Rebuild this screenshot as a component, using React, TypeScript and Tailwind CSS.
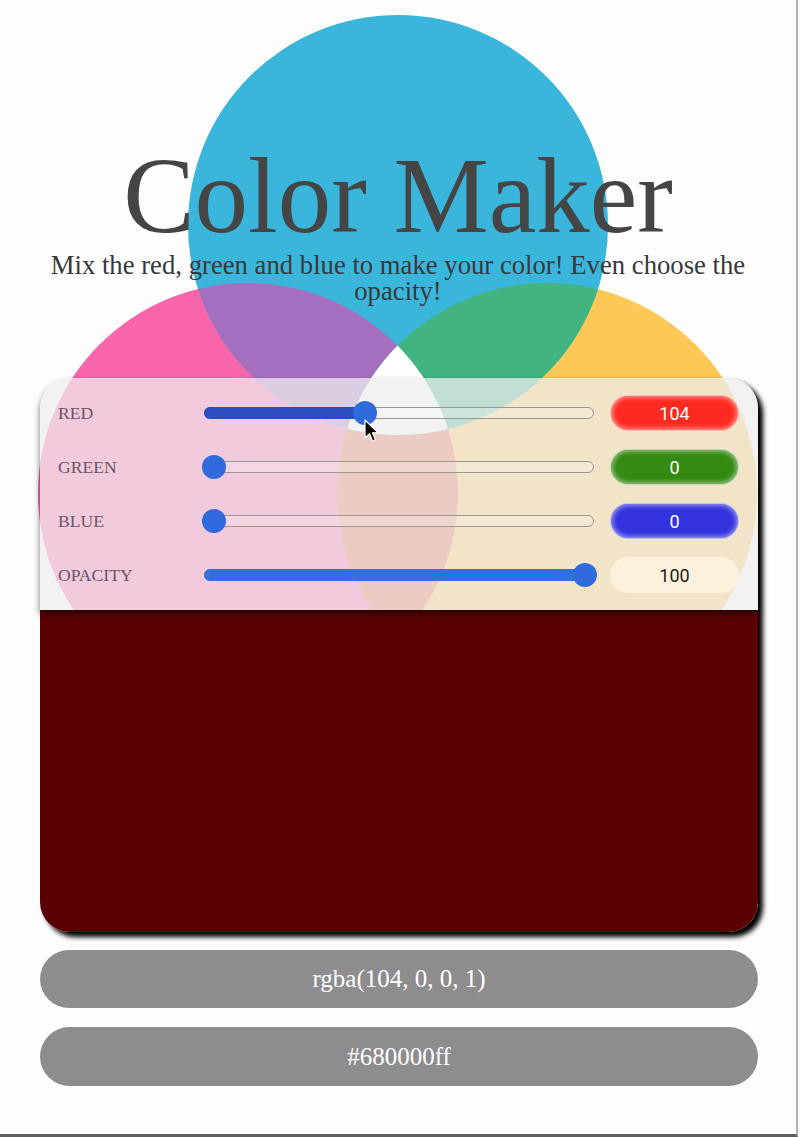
import React from "react";

const serif = { fontFamily: '"Liberation Serif", "Times New Roman", serif' };
const sans = { fontFamily: 'Roboto, "Noto Sans", sans-serif' };

function Circles() {
  return (
    <svg
      className="absolute left-0 top-0"
      width={800}
      height={720}
      viewBox="0 0 800 720"
    >
      <defs>
        <clipPath id="cb">
          <circle cx={398} cy={225} r={210} />
        </clipPath>
        <clipPath id="cp">
          <circle cx={248} cy={493} r={210} />
        </clipPath>
      </defs>
      <circle cx={248} cy={493} r={210} fill="#f965aa" />
      <circle cx={547} cy={493} r={210} fill="#fec857" />
      <g clipPath="url(#cp)">
        <circle cx={547} cy={493} r={210} fill="#e66a42" />
      </g>
      <circle cx={398} cy={225} r={210} fill="#3ab6dd" />
      <g clipPath="url(#cb)">
        <circle cx={248} cy={493} r={210} fill="#a56fbf" />
        <circle cx={547} cy={493} r={210} fill="#41b482" />
        <g clipPath="url(#cp)">
          <circle cx={547} cy={493} r={210} fill="#ffffff" />
        </g>
      </g>
    </svg>
  );
}

type SliderProps = { value: number; max: number; filled: boolean; fillColor: string };

function Slider({ value, max, filled, fillColor }: SliderProps) {
  const pos = 10 + (value / max) * 371;
  return (
    <div className="relative h-[24px] w-[390px]">
      <div className="absolute left-0 right-0 top-[6px] h-[12px] rounded-full border border-[#9c9790] bg-white/20" />
      {filled && (
        <div
          className="absolute left-0 top-[6px] h-[12px] rounded-full"
          style={{ width: pos, backgroundColor: fillColor }}
        />
      )}
      <div
        className="absolute top-0 h-[24px] w-[24px] rounded-full bg-[#2f6bdc]"
        style={{ left: pos - 12 }}
      />
    </div>
  );
}

type RowProps = {
  label: string;
  value: number;
  max: number;
  fillColor: string;
  box: string;
  text: string;
  glow: boolean;
};

function Row({ label, value, max, fillColor, box, text, glow }: RowProps) {
  return (
    <div className="flex h-[34px] items-center">
      <div className="w-[146px] text-[17.6px] text-[#6b5462]" style={serif}>
        {label}
      </div>
      <Slider value={value} max={max} filled={value > 0} fillColor={fillColor} />
      <div
        className={
          "ml-[16px] flex h-[36px] w-[129px] items-center justify-center rounded-full text-[18px] " +
          box +
          " " +
          text +
          (glow ? " border border-white/70 shadow-[inset_0_0_4px_2px_rgba(255,255,255,0.45)]" : "")
        }
        style={sans}
      >
        {value}
      </div>
    </div>
  );
}

function Cursor() {
  return (
    <svg className="absolute left-[364px] top-[419px] z-30" width={16} height={26} viewBox="0 0 16 26">
      <path
        d="M1 1 L1 19 L5.5 14.8 L8.6 22 L11.4 20.8 L8.4 13.8 L14 13.6 Z"
        fill="#000"
        stroke="#fff"
        strokeWidth={1.2}
        strokeLinejoin="round"
      />
    </svg>
  );
}

export default function App() {
  return (
    <div className="relative h-[1137px] w-[798px] overflow-hidden border-b-[3px] border-r-2 border-b-[#5f5f5f] border-r-[#b0b0b0] bg-[#fefdfe]">
      <Circles />
      <Cursor />
      <div className="relative flex flex-col items-center">
        <h1
          className="mt-[143px] text-[107px] leading-[107px] text-[#454545]"
          style={serif}
        >
          Color Maker
        </h1>
        <p
          className="mt-[2px] w-[760px] text-center text-[26.7px] leading-[26px] text-[#383838]"
          style={serif}
        >
          Mix the red, green and blue to make your color! Even choose the opacity!
        </p>
      </div>
      <div className="relative ml-[40px] mt-[74px] w-[718px] rounded-[30px] shadow-[5px_5px_5px_#000]">
        <div className="relative z-10 flex flex-col gap-[20px] rounded-t-[30px] bg-[rgba(238,238,238,0.75)] pb-[18px] pl-[18px] pr-[19px] pt-[18px] shadow-[0_4px_6px_rgba(0,0,0,0.55)]">
          <Row label="RED" value={104} max={255} fillColor="#2a4dbf" box="bg-[#ff2a1f]" text="text-white" glow />
          <Row label="GREEN" value={0} max={255} fillColor="#2a4dbf" box="bg-[#358a12]" text="text-white" glow />
          <Row label="BLUE" value={0} max={255} fillColor="#2a4dbf" box="bg-[#3333dd]" text="text-white" glow />
          <Row label="OPACITY" value={100} max={100} fillColor="#3370dd" box="bg-[#fdf1dc]" text="text-[#1e1a17]" glow={false} />
        </div>
        <div className="h-[322px] rounded-b-[30px] bg-[#5b0000]" />
      </div>
      <div className="ml-[40px] mt-[18px] flex w-[718px] flex-col gap-[19px]">
        <div
          className="flex h-[58px] items-center justify-center rounded-full bg-[#8e8c8f] text-[25px] text-white"
          style={serif}
        >
          rgba(104, 0, 0, 1)
        </div>
        <div
          className="flex h-[59px] items-center justify-center rounded-full bg-[#8e8c8f] text-[25px] text-white"
          style={serif}
        >
          #680000ff
        </div>
      </div>
    </div>
  );
}
